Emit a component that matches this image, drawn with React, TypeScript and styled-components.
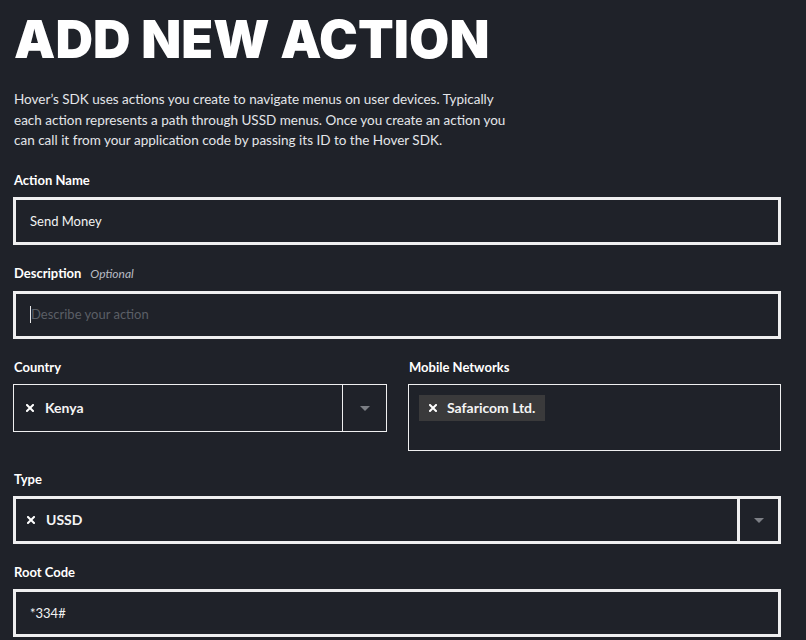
import React from "react";
import styled, { createGlobalStyle } from "styled-components";

const Global = createGlobalStyle`
  html, body { margin: 0; padding: 0; background: #1f2229; }
  body { font-family: Lato, "Open Sans", sans-serif; color: #e6e6e6; }
  * { box-sizing: border-box; }
`;

const Page = styled.div`
  width: 806px;
  height: 640px;
  overflow: hidden;
  padding: 12px 25px 0 13px;
  background: #1f2229;
`;

const Title = styled.h1`
  margin: 0;
  font-family: Inter, sans-serif;
  font-weight: 900;
  font-size: 52px;
  line-height: 56px;
  color: #ffffff;
  letter-spacing: 0.1px;
  padding-left: 1px;
`;

const Intro = styled.p`
  margin: 21px 0 0 1px;
  width: 496px;
  font-size: 13.5px;
  line-height: 20.5px;
  color: #e4e6ea;
`;

const Field = styled.div`
  margin-top: 18px;
  display: flex;
  flex-direction: column;
`;

const FirstField = styled(Field)`
  margin-top: 19px;
`;

const Label = styled.label`
  font-size: 13px;
  font-weight: 700;
  line-height: 18px;
  color: #ffffff;
  padding-top: 1px;
  margin: 0 0 8px 1px;
  display: flex;
  align-items: baseline;
  gap: 9px;
`;

const Optional = styled.span`
  font-size: 12px;
  font-weight: 400;
  font-style: italic;
  color: #b8bcc4;
`;

const TextBox = styled.div`
  height: 48px;
  border: 3px solid #efeff0;
  display: flex;
  align-items: center;
  padding-left: 14px;
  font-size: 13px;
  color: #f2f2f2;
`;

const Placeholder = styled.span`
  color: #5b5f66;
  border-left: 1px solid #e8e8e8;
  line-height: 17px;
`;

const Row = styled.div`
  display: grid;
  grid-template-columns: 374px 373px;
  column-gap: 21px;
  margin-top: 18px;
`;

const Col = styled.div`
  display: flex;
  flex-direction: column;
`;

const Select = styled.div<{ $thick?: boolean }>`
  height: 48px;
  border: ${(p) => (p.$thick ? 3 : 1)}px solid #efeff0;
  display: flex;
  align-items: stretch;
`;

const SelectValue = styled.div<{ $thick?: boolean }>`
  flex: 1;
  display: flex;
  align-items: center;
  padding-left: ${(p) => (p.$thick ? 11 : 12)}px;
  font-size: 14px;
  font-weight: 700;
  color: #f4f4f4;
  gap: 11px;
`;

const Caret = styled.div<{ $thick?: boolean }>`
  width: ${(p) => (p.$thick ? 41 : 44)}px;
  border-left: ${(p) => (p.$thick ? 3 : 1)}px solid #efeff0;
  display: flex;
  align-items: center;
  justify-content: center;
  &::after {
    content: "";
    width: 0;
    height: 0;
    border-left: 5px solid transparent;
    border-right: 5px solid transparent;
    border-top: 5px solid #7c7f85;
    margin-top: 1px;
  }
`;

const MultiBox = styled.div`
  height: 67px;
  border: 1px solid #efeff0;
  padding: 10px 10px;
  display: flex;
  align-items: flex-start;
`;

const Chip = styled.div`
  height: 26px;
  background: #3a3a3b;
  display: flex;
  align-items: center;
  padding: 0 10px 0 10px;
  gap: 10px;
  font-size: 14px;
  font-weight: 700;
  color: #f4f4f4;
`;

const X = () => (
  <svg width="8" height="8" viewBox="0 0 8 8" style={{ flexShrink: 0 }}>
    <path d="M1 1 L7 7 M7 1 L1 7" stroke="#ffffff" strokeWidth="2" strokeLinecap="square" />
  </svg>
);

export default function App() {
  return (
    <Page>
      <Global />
      <Title>ADD NEW ACTION</Title>
      <Intro>
        Hover’s SDK uses actions you create to navigate menus on user devices. Typically
        each action represents a path through USSD menus. Once you create an action you
        can call it from your application code by passing its ID to the Hover SDK.
      </Intro>
      <FirstField>
        <Label>Action Name</Label>
        <TextBox>Send Money</TextBox>
      </FirstField>
      <Field>
        <Label>
          Description <Optional>Optional</Optional>
        </Label>
        <TextBox>
          <Placeholder>Describe your action</Placeholder>
        </TextBox>
      </Field>
      <Row>
        <Col>
          <Label>Country</Label>
          <Select>
            <SelectValue>
              <X />
              Kenya
            </SelectValue>
            <Caret />
          </Select>
        </Col>
        <Col>
          <Label>Mobile Networks</Label>
          <MultiBox>
            <Chip>
              <X />
              Safaricom Ltd.
            </Chip>
          </MultiBox>
        </Col>
      </Row>
      <Field>
        <Label>Type</Label>
        <Select $thick>
          <SelectValue $thick>
            <X />
            USSD
          </SelectValue>
          <Caret $thick />
        </Select>
      </Field>
      <Field>
        <Label>Root Code</Label>
        <TextBox>*334#</TextBox>
      </Field>
    </Page>
  );
}
